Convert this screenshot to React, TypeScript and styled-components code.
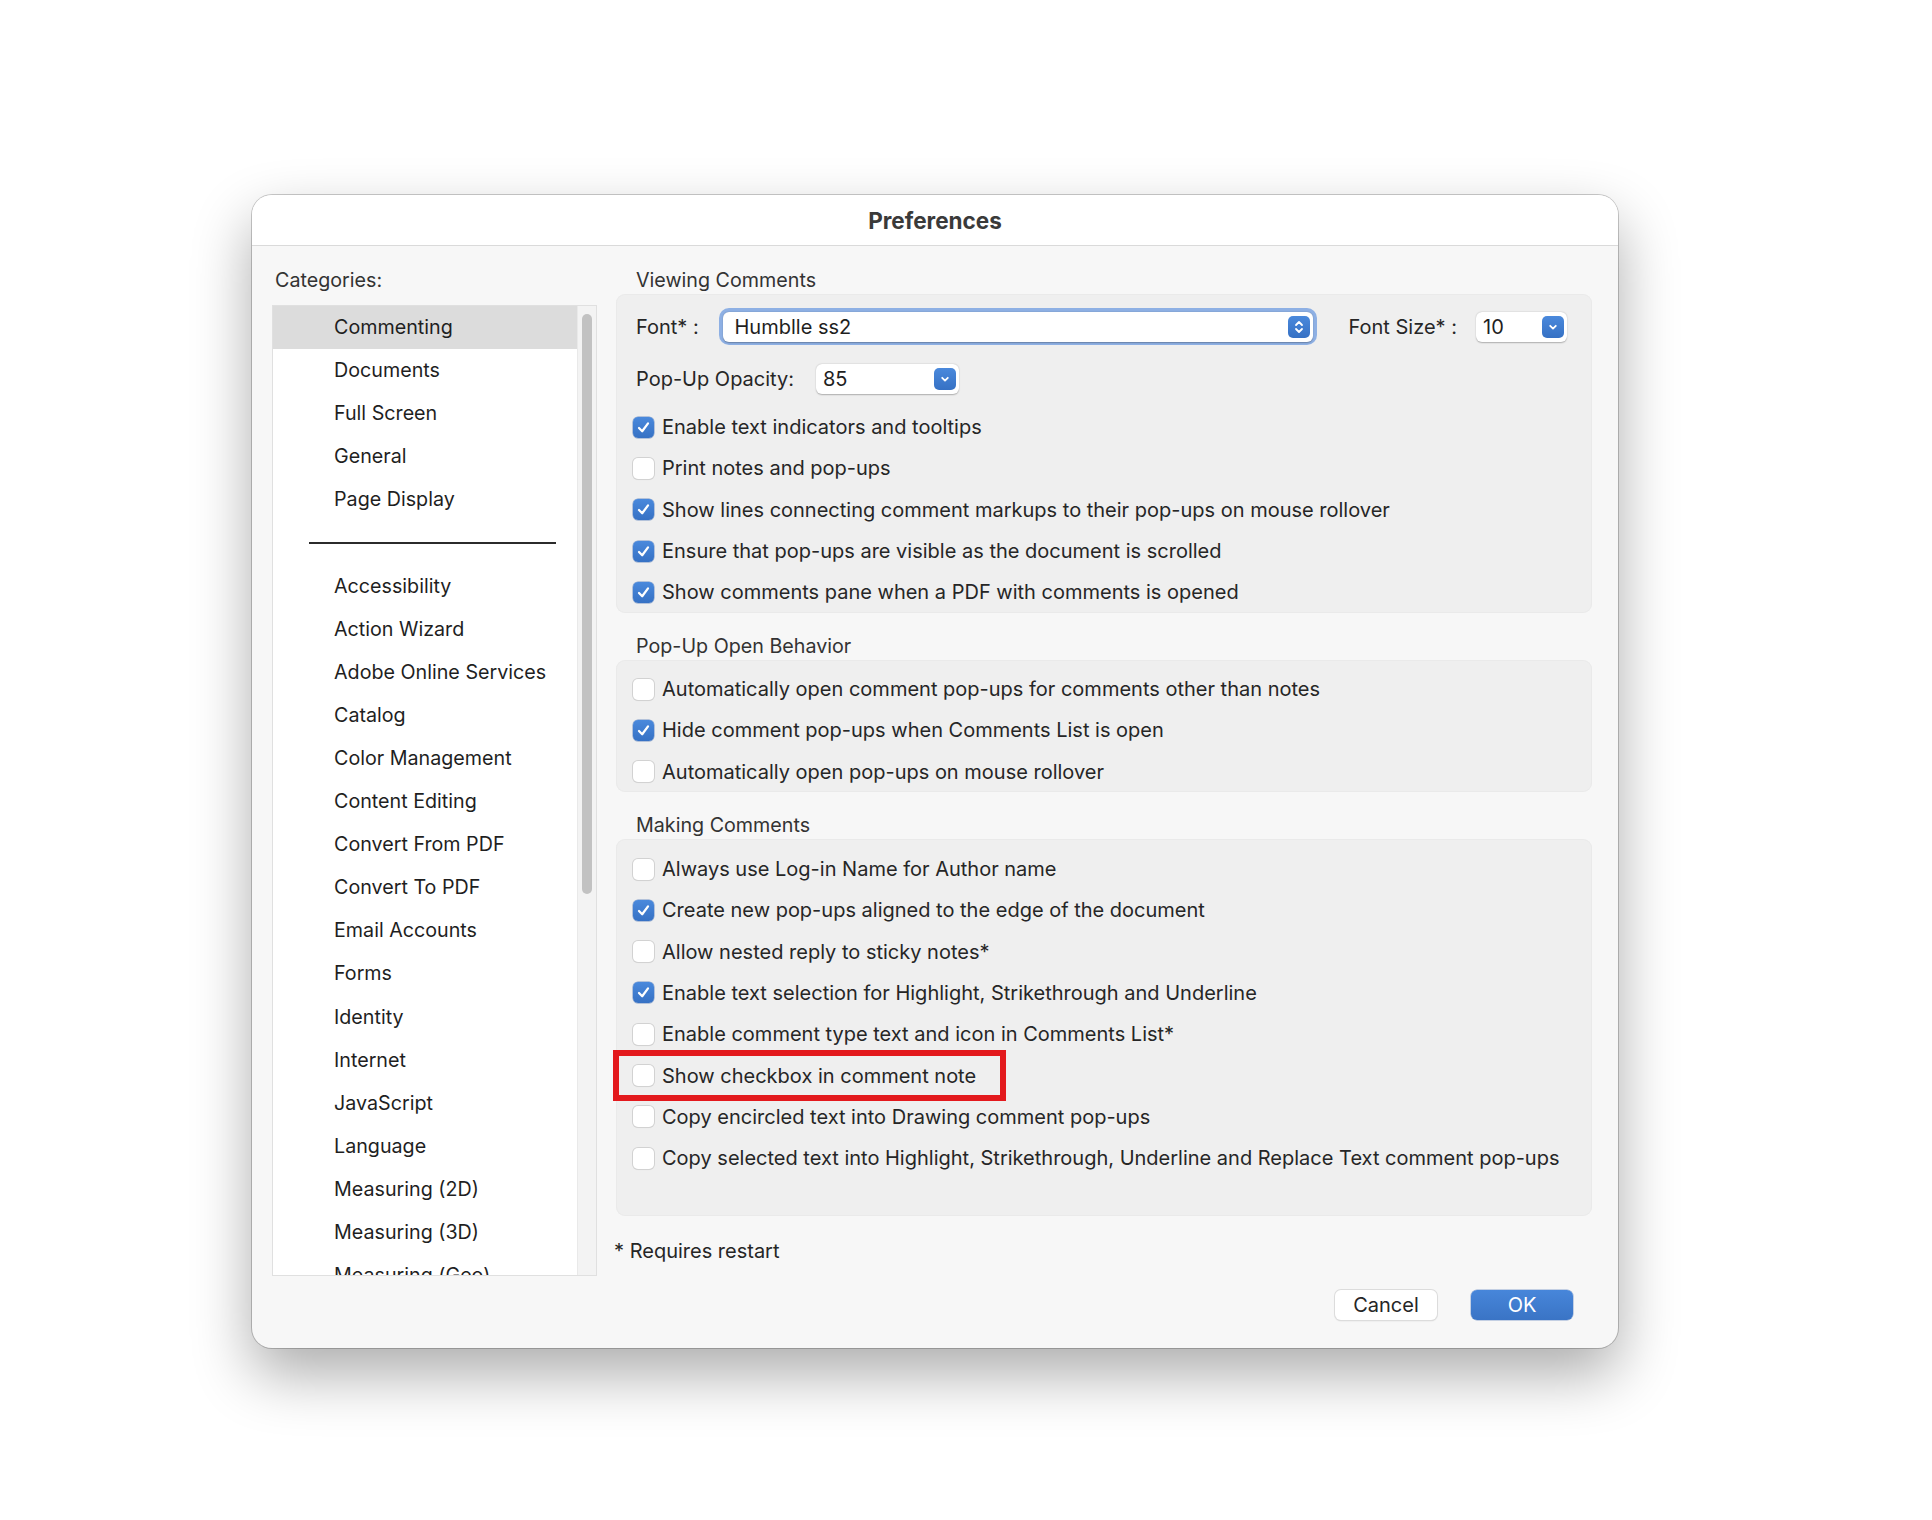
import React from 'react';
import styled, { createGlobalStyle } from 'styled-components';

const GlobalStyle = createGlobalStyle`
  html, body {
    margin: 0;
    padding: 0;
    background: #ffffff;
  }
  body {
    font-family: Inter, "Noto Sans", "Liberation Sans", sans-serif;
    color: #262626;
    -webkit-font-smoothing: antialiased;
  }
`;

const Page = styled.div`
  width: 1932px;
  height: 1520px;
  padding: 195px 0 0 252px;
  box-sizing: border-box;
`;

const Window = styled.div`
  width: 1366px;
  height: 1153px;
  border-radius: 20px;
  background: #f7f7f7;
  box-shadow: 0 0 0 1px rgba(0, 0, 0, 0.2), 0 26px 60px rgba(0, 0, 0, 0.33);
  display: flex;
  flex-direction: column;
  overflow: hidden;
`;

const TitleBar = styled.div`
  height: 50px;
  flex-shrink: 0;
  background: #ffffff;
  border-bottom: 1px solid #dadada;
  display: flex;
  align-items: center;
  justify-content: center;
  font-size: 22.5px;
  font-weight: 700;
  color: #3a3a3a;
`;

const Body = styled.div`
  flex: 1;
  display: flex;
  gap: 19px;
  padding: 21px 26px 0 20px;
`;

const Sidebar = styled.div`
  width: 325px;
  display: flex;
  flex-direction: column;
`;

const SmallLabel = styled.div`
  height: 26px;
  line-height: 26px;
  font-size: 19.7px;
  color: #333;
  white-space: nowrap;
`;

const CategoriesLabel = styled(SmallLabel)`
  padding-left: 3px;
  margin-bottom: 12px;
`;

const ListBox = styled.div`
  height: 971px;
  box-sizing: border-box;
  background: #ffffff;
  border: 1px solid #e0e0e0;
  display: flex;
  overflow: hidden;
`;

const ListItems = styled.div`
  flex: 1;
  display: flex;
  flex-direction: column;
`;

const ListItem = styled.div<{ $selected?: boolean }>`
  height: 43.1px;
  flex-shrink: 0;
  line-height: 43px;
  padding-left: 61px;
  font-size: 19.7px;
  color: #1f1f1f;
  white-space: nowrap;
  background: ${(p) => (p.$selected ? '#dcdcdc' : 'transparent')};
`;

const ListDivider = styled.div`
  height: 43.1px;
  flex-shrink: 0;
  display: flex;
  align-items: center;
  padding: 0 21px 0 36px;
  &::after {
    content: '';
    flex: 1;
    height: 2px;
    background: #2b2b2b;
  }
`;

const ScrollTrack = styled.div`
  width: 19px;
  flex-shrink: 0;
  background: #f3f3f3;
  border-left: 1px solid #e9e9e9;
  padding: 8px 0 0 4px;
  box-sizing: border-box;
`;

const ScrollThumb = styled.div`
  width: 10px;
  height: 580px;
  border-radius: 5px;
  background: #c2c2c2;
`;

const Main = styled.div`
  flex: 1;
  display: flex;
  flex-direction: column;
`;

const SectionLabel = styled(SmallLabel)<{ $first?: boolean }>`
  padding-left: 20px;
  margin-top: ${(p) => (p.$first ? '0' : '20px')};
  margin-bottom: 1px;
`;

const Group = styled.div<{ $top?: number; $bottom?: number }>`
  background: #efefef;
  border-radius: 9px;
  box-shadow: inset 0 0 0 1px #eaeaea;
  padding: ${(p) => p.$top ?? 9}px 20px ${(p) => p.$bottom ?? 0}px 17px;
  display: flex;
  flex-direction: column;
`;

const FieldRow = styled.div<{ $h: number }>`
  height: ${(p) => p.$h}px;
  display: flex;
  align-items: center;
  padding: 0 5px 0 3px;
  font-size: 20px;
  color: #262626;
`;

const FieldLabel = styled.span<{ $w: number }>`
  width: ${(p) => p.$w}px;
  flex-shrink: 0;
  white-space: nowrap;
`;

const FocusRing = styled.div`
  flex: 1;
  height: 37px;
  box-sizing: border-box;
  border-radius: 10px;
  background: #8eb0e4;
  padding: 3.5px;
  display: flex;
`;

const ComboField = styled.div<{ $w?: number; $pad?: number }>`
  ${(p) => (p.$w ? `width: ${p.$w}px;` : 'flex: 1;')}
  height: 30px;
  box-sizing: border-box;
  background: #ffffff;
  border-radius: 6px;
  box-shadow: 0 0.5px 1.5px rgba(0, 0, 0, 0.28);
  display: flex;
  align-items: center;
  justify-content: space-between;
  padding: 0 3px 0 ${(p) => p.$pad ?? 7}px;
  font-size: 20px;
  color: #1f1f1f;
`;

const ArrowButton = styled.div`
  width: 22px;
  height: 22px;
  border-radius: 5px;
  background: linear-gradient(#4a89dc, #3671c4);
  display: flex;
  align-items: center;
  justify-content: center;
`;

const FontSizeLabel = styled.span`
  margin: 0 19px 0 32px;
  white-space: nowrap;
`;

const CheckRow = styled.div`
  height: 41.3px;
  display: flex;
  align-items: center;
  gap: 8px;
  font-size: 20px;
  color: #262626;
  white-space: nowrap;
`;

const Highlight = styled.div`
  position: relative;
  align-self: flex-start;
  &::before {
    content: '';
    position: absolute;
    left: -20px;
    right: -30px;
    top: -5px;
    bottom: -5px;
    border: 6px solid #e3191d;
    pointer-events: none;
  }
`;

const Box = styled.div<{ $on: boolean }>`
  width: 21px;
  height: 21px;
  flex-shrink: 0;
  box-sizing: border-box;
  border-radius: 5px;
  display: flex;
  align-items: center;
  justify-content: center;
  background: ${(p) => (p.$on ? 'linear-gradient(#4a89dc, #3671c4)' : '#ffffff')};
  box-shadow: ${(p) =>
    p.$on ? '0 0 0 0.5px rgba(40, 90, 170, 0.6)' : '0 0 0 1px #d2d2d2, 0 1px 1px rgba(0,0,0,0.08)'};
`;

const Note = styled(SmallLabel)`
  margin-top: 22px;
  margin-left: -2px;
  font-size: 20px;
  color: #262626;
`;

const Buttons = styled.div`
  display: flex;
  justify-content: flex-end;
  gap: 34px;
  margin-top: 26px;
  padding-right: 19px;
`;

const Button = styled.div<{ $primary?: boolean }>`
  width: 102px;
  height: 30px;
  box-sizing: border-box;
  border-radius: 6px;
  display: flex;
  align-items: center;
  justify-content: center;
  font-size: 20px;
  color: ${(p) => (p.$primary ? '#ffffff' : '#262626')};
  background: ${(p) => (p.$primary ? 'linear-gradient(#4786da, #3a74c5)' : '#ffffff')};
  box-shadow: ${(p) =>
    p.$primary ? '0 0 0 0.5px rgba(40, 90, 170, 0.5)' : '0 0 0 1px #dcdcdc, 0 1px 1.5px rgba(0,0,0,0.18)'};
`;

const Check = () => (
  <svg width="15" height="15" viewBox="0 0 16 16" fill="none">
    <path d="M3.2 8.6 L6.6 12 L12.8 3.6" stroke="#fff" strokeWidth="2.4" strokeLinecap="round" strokeLinejoin="round" />
  </svg>
);

const Stepper = () => (
  <svg width="12" height="16" viewBox="0 0 12 16" fill="none">
    <path d="M3 6 L6 3 L9 6 M3 10 L6 13 L9 10" stroke="#fff" strokeWidth="1.8" strokeLinecap="round" strokeLinejoin="round" />
  </svg>
);

const Chevron = () => (
  <svg width="12" height="12" viewBox="0 0 12 12" fill="none">
    <path d="M3.2 4.8 L6 7.6 L8.8 4.8" stroke="#fff" strokeWidth="1.8" strokeLinecap="round" strokeLinejoin="round" />
  </svg>
);

const topCategories = ['Commenting', 'Documents', 'Full Screen', 'General', 'Page Display'];
const otherCategories = [
  'Accessibility',
  'Action Wizard',
  'Adobe Online Services',
  'Catalog',
  'Color Management',
  'Content Editing',
  'Convert From PDF',
  'Convert To PDF',
  'Email Accounts',
  'Forms',
  'Identity',
  'Internet',
  'JavaScript',
  'Language',
  'Measuring (2D)',
  'Measuring (3D)',
  'Measuring (Geo)',
];

type Option = { label: string; on: boolean; marked?: boolean };

const viewing: Option[] = [
  { label: 'Enable text indicators and tooltips', on: true },
  { label: 'Print notes and pop-ups', on: false },
  { label: 'Show lines connecting comment markups to their pop-ups on mouse rollover', on: true },
  { label: 'Ensure that pop-ups are visible as the document is scrolled', on: true },
  { label: 'Show comments pane when a PDF with comments is opened', on: true },
];

const openBehavior: Option[] = [
  { label: 'Automatically open comment pop-ups for comments other than notes', on: false },
  { label: 'Hide comment pop-ups when Comments List is open', on: true },
  { label: 'Automatically open pop-ups on mouse rollover', on: false },
];

const making: Option[] = [
  { label: 'Always use Log-in Name for Author name', on: false },
  { label: 'Create new pop-ups aligned to the edge of the document', on: true },
  { label: 'Allow nested reply to sticky notes*', on: false },
  { label: 'Enable text selection for Highlight, Strikethrough and Underline', on: true },
  { label: 'Enable comment type text and icon in Comments List*', on: false },
  { label: 'Show checkbox in comment note', on: false, marked: true },
  { label: 'Copy encircled text into Drawing comment pop-ups', on: false },
  { label: 'Copy selected text into Highlight, Strikethrough, Underline and Replace Text comment pop-ups', on: false },
];

const OptionRow: React.FC<{ option: Option }> = ({ option }) => {
  const row = (
    <CheckRow>
      <Box $on={option.on}>{option.on && <Check />}</Box>
      <span>{option.label}</span>
    </CheckRow>
  );
  if (!option.marked) return row;
  return <Highlight>{row}</Highlight>;
};

const App: React.FC = () => {
  return (
    <Page>
      <GlobalStyle />
      <Window>
        <TitleBar>Preferences</TitleBar>
        <Body>
          <Sidebar>
            <CategoriesLabel>Categories:</CategoriesLabel>
            <ListBox>
              <ListItems>
                {topCategories.map((c, i) => (
                  <ListItem key={c} $selected={i === 0}>
                    {c}
                  </ListItem>
                ))}
                <ListDivider />
                {otherCategories.map((c) => (
                  <ListItem key={c}>{c}</ListItem>
                ))}
              </ListItems>
              <ScrollTrack>
                <ScrollThumb />
              </ScrollTrack>
            </ListBox>
          </Sidebar>

          <Main>
            <SectionLabel $first>Viewing Comments</SectionLabel>
            <Group $top={14}>
              <FieldRow $h={37}>
                <FieldLabel $w={83}>Font* :</FieldLabel>
                <FocusRing>
                  <ComboField $pad={12}>
                    Humblle ss2
                    <ArrowButton>
                      <Stepper />
                    </ArrowButton>
                  </ComboField>
                </FocusRing>
                <FontSizeLabel>Font Size* :</FontSizeLabel>
                <ComboField $w={91}>
                  10
                  <ArrowButton>
                    <Chevron />
                  </ArrowButton>
                </ComboField>
              </FieldRow>
              <FieldRow $h={30} style={{ marginTop: 19, marginBottom: 12.5 }}>
                <FieldLabel $w={180}>Pop-Up Opacity:</FieldLabel>
                <ComboField $w={143}>
                  85
                  <ArrowButton>
                    <Chevron />
                  </ArrowButton>
                </ComboField>
              </FieldRow>
              {viewing.map((o) => (
                <OptionRow key={o.label} option={o} />
              ))}
            </Group>

            <SectionLabel>Pop-Up Open Behavior</SectionLabel>
            <Group $top={8.5}>
              {openBehavior.map((o) => (
                <OptionRow key={o.label} option={o} />
              ))}
            </Group>

            <SectionLabel>Making Comments</SectionLabel>
            <Group $bottom={37}>
              {making.map((o) => (
                <OptionRow key={o.label} option={o} />
              ))}
            </Group>

            <Note>* Requires restart</Note>
            <Buttons>
              <Button>Cancel</Button>
              <Button $primary>OK</Button>
            </Buttons>
          </Main>
        </Body>
      </Window>
    </Page>
  );
};

export default App;
